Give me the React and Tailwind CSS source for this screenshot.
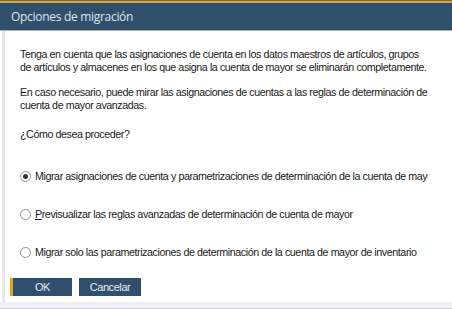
import React, { useState } from 'react';

const options = [
  { key: 'all', pre: 'Mi', ul: 'g', post: 'rar asignaciones de cuenta y parametrizaciones de determinación de la cuenta de mayor' },
  { key: 'preview', pre: '', ul: 'P', post: 'revisualizar las reglas avanzadas de determinación de cuenta de mayor' },
  { key: 'inv', pre: 'Mi', ul: 'g', post: 'rar solo las parametrizaciones de determinación de la cuenta de mayor de inventario' },
];

const Radio = ({ checked }) => (
  <span className="flex h-[11px] w-[11px] shrink-0 items-center justify-center rounded-full border border-[#8f8f8f] bg-white">
    {checked && <span className="h-[5px] w-[5px] rounded-full bg-[#333]" />}
  </span>
);

const App = () => {
  const [choice, setChoice] = useState('all');

  return (
    <div className="flex h-[309px] w-[452px] flex-col overflow-hidden bg-white font-['Liberation_Sans',Arial,sans-serif]">
      {/* window frame top */}
      <div className="h-px bg-[#6f6a5c]" />
      <div className="h-[2px] bg-[#e3a424]" />

      {/* title bar */}
      <div className="flex h-[28px] items-center border-b border-[#9fb0c2] bg-[#2f4f6d] pl-[11px] font-['Open_Sans',sans-serif] text-[12px] tracking-[-0.3px] text-[#dfe6ee]">
        Opciones de migración
      </div>

      <div className="flex flex-1">
        <div className="ml-[2px] w-[3px] bg-[#e4e8ee]" />
        <div className="flex min-w-0 flex-1 flex-col text-[10.7px] leading-[13px] tracking-[-0.42px] text-[#1a1a1a]">
          <p className="mt-[17px] whitespace-nowrap pl-[15px]">
            Tenga en cuenta que las asignaciones de cuenta en los datos maestros de artículos, grupos
            <br />
            de artículos y almacenes en los que asigna la cuenta de mayor se eliminarán completamente.
          </p>
          <p className="mt-[12px] whitespace-nowrap pl-[15px]">
            En caso necesario, puede mirar las asignaciones de cuentas a las reglas de determinación de
            <br />
            cuenta de mayor avanzadas.
          </p>
          <p className="mt-[16px] pl-[15px]">¿Cómo desea proceder?</p>

          <div className="mt-[29px] mr-[24px] flex flex-col gap-[25px] overflow-hidden pl-[15px]">
            {options.map((o) => (
              <label key={o.key} className="flex items-center gap-[4px] whitespace-nowrap" onClick={() => setChoice(o.key)}>
                <Radio checked={choice === o.key} />
                <span>
                  {o.pre}
                  <span className="underline">{o.ul}</span>
                  {o.post}
                </span>
              </label>
            ))}
          </div>

          <div className="mt-auto mb-[6px] flex gap-[7px] pl-[5px]">
            <button className="h-[18px] w-[62px] border-l-[3px] border-[#e8a317] bg-[#2f4f6d] text-[11px] text-[#e6ecf2]">OK</button>
            <button className="h-[18px] w-[62px] bg-[#2f4f6d] text-[11px] text-[#e6ecf2]">Cancelar</button>
          </div>
        </div>
      </div>

      {/* bottom frame */}
      <div className="h-[6px] bg-[#f0f0f0]" />
      <div className="h-px bg-[#c4cfdc]" />
    </div>
  );
};

export default App;
